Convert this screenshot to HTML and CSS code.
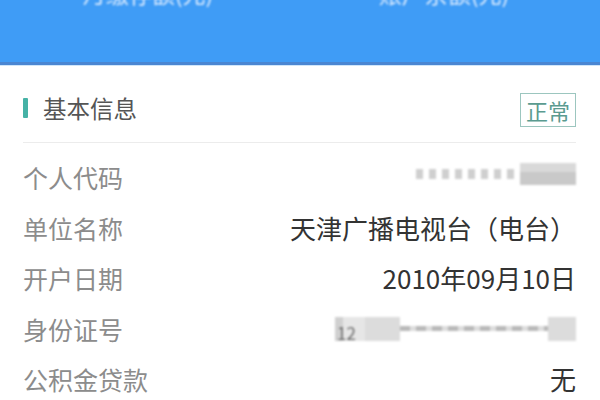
FILE: index.html
```html
<!DOCTYPE html>
<html lang="zh-CN">
<head>
<meta charset="utf-8">
<title>基本信息</title>
<link rel="stylesheet" href="styles.css">
</head>
<body>
<header class="top">
  <div class="top-col"><span class="top-text">月缴存额(元)</span></div>
  <div class="top-col"><span class="top-text">账户余额(元)</span></div>
</header>
<main class="card">
  <div class="card-head">
    <div class="title"><span class="title-bar"></span><span class="title-text">基本信息</span></div>
    <span class="badge">正常</span>
  </div>
  <div class="rows">
    <div class="row">
      <span class="label">个人代码</span>
      <span class="mask mask-code" aria-hidden="true">
        <span class="dots"><i></i><i></i><i></i><i></i><i></i><i></i><i></i><i></i></span>
        <span class="block"></span>
      </span>
    </div>
    <div class="row">
      <span class="label">单位名称</span>
      <span class="value">天津广播电视台（电台）</span>
    </div>
    <div class="row">
      <span class="label">开户日期</span>
      <span class="value">2010年09月10日</span>
    </div>
    <div class="row">
      <span class="label">身份证号</span>
      <span class="mask mask-id">
        <span class="id-head"><span class="id-num">12</span></span>
        <span class="id-dashes"></span>
        <span class="id-tail"></span>
      </span>
    </div>
    <div class="row">
      <span class="label">公积金贷款</span>
      <span class="value">无</span>
    </div>
  </div>
</main>
</body>
</html>
```
FILE: styles.css
```css
* { box-sizing: border-box; }
html, body { margin: 0; padding: 0; background: #ffffff; }
body {
  font-family: "Noto Sans CJK SC", "Noto Sans", sans-serif;
  width: 600px;
  height: 400px;
  overflow: hidden;
}

.top {
  height: 65px;
  background: #3f9cf6;
  border-bottom: 3px solid #4a86d2;
  box-shadow: 0 1px 0 #cfe6fb;
  display: flex;
  padding-right: 8px;
  overflow: hidden;
}
.top-col {
  flex: 1;
  display: flex;
  justify-content: center;
}
.top-text {
  display: block;
  margin-top: -18px;
  font-size: 23px;
  line-height: 23px;
  color: #dcecff;
  filter: blur(0.8px);
}

.card {
  padding: 28px 24px 0 23px;
}
.card-head {
  display: flex;
  justify-content: space-between;
  align-items: center;
  height: 34px;
}
.title {
  display: flex;
  align-items: center;
  margin-top: -4px;
}
.title-bar {
  width: 5px;
  height: 20px;
  background: #46b2a6;
  border-radius: 1px;
}
.title-text {
  margin-left: 15px;
  font-size: 23.5px;
  line-height: 28px;
  color: #555555;
}
.badge {
  height: 34px;
  padding: 0 5px;
  border: 1px solid #9cc6bf;
  font-size: 22px;
  line-height: 32px;
  color: #5b9b90;
}

.rows {
  margin-top: 15px;
  border-top: 1px solid #ececec;
  padding-top: 9px;
}
.row {
  height: 50.5px;
  display: flex;
  justify-content: space-between;
  align-items: center;
}
.label {
  font-size: 25px;
  color: #8c8c8c;
  line-height: 30px;
}
.value {
  font-size: 26px;
  color: #333333;
  line-height: 30px;
}

.mask { display: flex; align-items: center; }
.mask-code {
  width: 160px;
  height: 22px;
  margin-top: -6px;
  filter: blur(1.2px);
}
.dots {
  flex: 1;
  display: flex;
  align-items: center;
  justify-content: space-between;
  padding-right: 6px;
}
.dots i {
  display: block;
  width: 7px;
  height: 10px;
  background: #cfcfcf;
}
.block {
  width: 56px;
  height: 22px;
  background: linear-gradient(#d9d9d9 0 40%, #c9c9c9 40% 100%);
}

.mask-id {
  width: 241px;
  height: 24px;
  filter: blur(1px);
}
.id-head {
  width: 65px;
  height: 24px;
  background: linear-gradient(90deg, #d0d0d0 0 8px, #e6e6e6 8px 30px, #dcdcdc 30px 100%);
  display: flex;
  align-items: flex-end;
  padding-left: 2px;
}
.id-num {
  font-size: 17px;
  line-height: 17px;
  color: #6a6a6a;
}
.id-dashes {
  flex: 1;
  height: 5px;
  background: repeating-linear-gradient(90deg, #b9b9b9 0 10px, #dddddd 10px 16px);
}
.id-tail {
  width: 28px;
  height: 24px;
  background: #dcdcdc;
}
```
